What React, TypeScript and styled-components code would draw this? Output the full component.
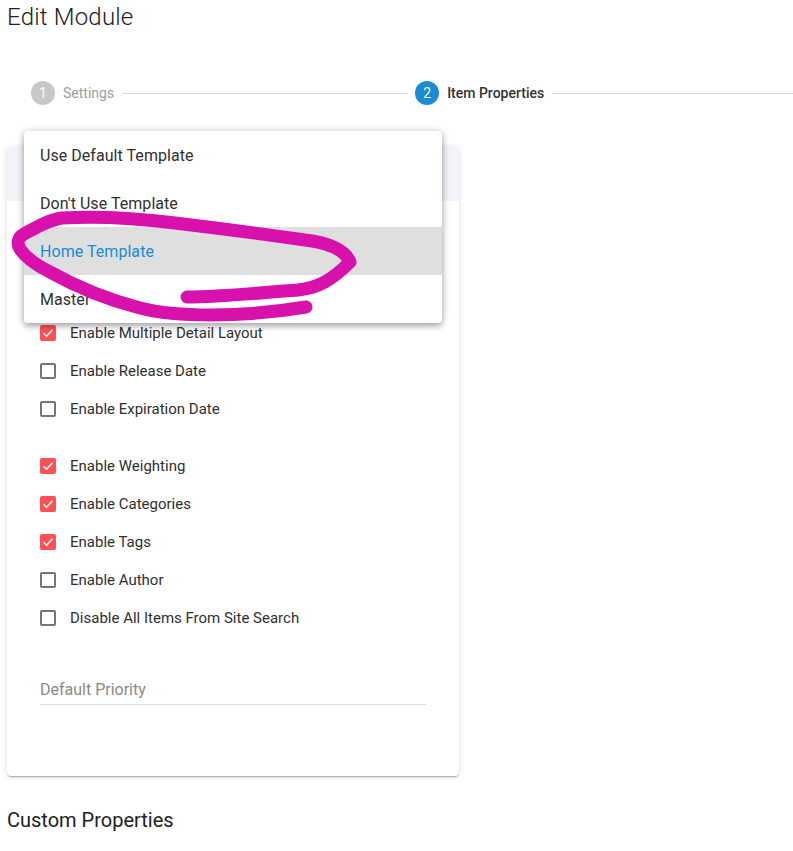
import React, { FC } from 'react'
import styled, { createGlobalStyle } from 'styled-components'

const GlobalStyle = createGlobalStyle`
  html, body {
    margin: 0;
    padding: 0;
    background: #fff;
    overflow: hidden;
  }
  body {
    font-family: Roboto, "Liberation Sans", sans-serif;
    color: #212121;
  }
`

const Page = styled.div`
  position: relative;
  width: 793px;
  height: 851px;
  overflow: hidden;
  padding-top: 1px;
  box-sizing: border-box;
`

const Title = styled.h1`
  margin: 0 0 0 7px;
  height: 32px;
  font-size: 24px;
  line-height: 32px;
  font-weight: 300;
  letter-spacing: 0.2px;
  color: #212121;
`

const Stepper = styled.div`
  display: flex;
  align-items: center;
  margin-top: 48px;
  padding-left: 31px;
  height: 24px;
`

const StepCircle = styled.span<{ $active?: boolean }>`
  flex: none;
  width: 24px;
  height: 24px;
  border-radius: 50%;
  display: flex;
  align-items: center;
  justify-content: center;
  font-size: 14px;
  color: #fff;
  background: ${p => (p.$active ? '#1a8bd4' : '#c8c8c8')};
`

const StepLabel = styled.span<{ $active?: boolean }>`
  flex: none;
  margin-left: 8px;
  font-size: 14px;
  font-weight: ${p => (p.$active ? 500 : 400)};
  color: ${p => (p.$active ? '#333' : '#9e9e9e')};
`

const StepLine = styled.span<{ $width: number }>`
  flex: none;
  width: ${p => p.$width}px;
  height: 1px;
  margin: 0 8px;
  background: #dcdcdc;
`

const Card = styled.section`
  position: relative;
  box-sizing: border-box;
  width: 452px;
  height: 628px;
  margin: 43px 0 0 7px;
  border-radius: 4px;
  background: #fff;
  box-shadow: 0 2px 2px -1px rgba(0, 0, 0, 0.35), 0 0 6px rgba(0, 0, 0, 0.12);
`

const CardBand = styled.div`
  height: 53px;
  border-radius: 4px 4px 0 0;
  background: #f3f4f9;
`

const CardBody = styled.div`
  padding: 122px 33px 0;
`

const OptionGroup = styled.div`
  display: flex;
  flex-direction: column;
  gap: 18px;
  margin-bottom: 37px;
`

const OptionRow = styled.label`
  display: flex;
  align-items: center;
  height: 20px;
  font-size: 15px;
  color: #303030;
`

const Box = styled.span<{ $checked?: boolean }>`
  flex: none;
  box-sizing: border-box;
  display: flex;
  align-items: center;
  justify-content: center;
  width: 16px;
  height: 16px;
  margin-right: 14px;
  border-radius: 2px;
  border: ${p => (p.$checked ? 'none' : '2px solid #757575')};
  background: ${p => (p.$checked ? '#fc5255' : 'transparent')};
`

const PriorityField = styled.div`
  margin-top: 50px;
  width: 386px;
  height: 27px;
  box-sizing: border-box;
  border-bottom: 1px solid #dcdcdc;
  font-size: 16px;
  line-height: 24px;
  color: #8a8a8a;
`

const SectionTitle = styled.h2`
  margin: 32px 0 0 7px;
  font-size: 20px;
  line-height: 24px;
  font-weight: 400;
  color: #212121;
`

const Menu = styled.ul`
  position: absolute;
  left: 24px;
  top: 131px;
  width: 418px;
  margin: 0;
  padding: 0;
  list-style: none;
  background: #fff;
  border-radius: 4px;
  box-shadow: 0 3px 6px rgba(0, 0, 0, 0.3), 0 0 10px rgba(0, 0, 0, 0.14);
`

const MenuItem = styled.li<{ $selected?: boolean }>`
  box-sizing: border-box;
  height: 48px;
  padding: 1px 0 0 16px;
  font-size: 16px;
  line-height: 48px;
  letter-spacing: 0.05px;
  color: ${p => (p.$selected ? '#1a8bd4' : '#303030')};
  background: ${p => (p.$selected ? '#dfdfdf' : 'transparent')};
`

const Scribble = styled.svg`
  position: absolute;
  left: 0;
  top: 0;
  pointer-events: none;
`

const CheckMark: FC = () => (
  <svg width='12' height='12' viewBox='0 0 12 12' fill='none'>
    <path d='M1.5 6.2 L4.6 9.2 L10.5 2.8' stroke='#fff' strokeWidth='1.5' />
  </svg>
)

interface OptionProps {
  label: string
  checked?: boolean
}

const Option: FC<OptionProps> = ({ label, checked }) => (
  <OptionRow>
    <Box $checked={checked}>{checked && <CheckMark />}</Box>
    {label}
  </OptionRow>
)

const App: FC = () => {
  return (
    <Page>
      <GlobalStyle />
      <Title>Edit Module</Title>
      <Stepper>
        <StepCircle>1</StepCircle>
        <StepLabel>Settings</StepLabel>
        <StepLine $width={285} />
        <StepCircle $active>2</StepCircle>
        <StepLabel $active>Item Properties</StepLabel>
        <StepLine $width={241} />
      </Stepper>
      <Card>
        <CardBand />
        <CardBody>
          <OptionGroup>
            <Option label='Enable Multiple Detail Layout' checked />
            <Option label='Enable Release Date' />
            <Option label='Enable Expiration Date' />
          </OptionGroup>
          <OptionGroup>
            <Option label='Enable Weighting' checked />
            <Option label='Enable Categories' checked />
            <Option label='Enable Tags' checked />
            <Option label='Enable Author' />
            <Option label='Disable All Items From Site Search' />
          </OptionGroup>
          <PriorityField>Default Priority</PriorityField>
        </CardBody>
      </Card>
      <SectionTitle>Custom Properties</SectionTitle>
      <Menu>
        <MenuItem>Use Default Template</MenuItem>
        <MenuItem>Don't Use Template</MenuItem>
        <MenuItem $selected>Home Template</MenuItem>
        <MenuItem>Master</MenuItem>
      </Menu>
      <Scribble width='793' height='851' viewBox='0 0 793 851' fill='none'>
        <path
          d='M187 297 C225 297 265 292 298 290 C318 288 332 280 350 262 C345 250 330 243 305 240 C270 235 225 229 175 223 C135 218 95 216 62 218 C48 220 35 228 24 234 C17 238 17 244 20 249 C26 258 36 265 50 272 C75 286 105 299 140 308 C175 317 240 318 306 307'
          stroke='#d911ac'
          strokeWidth='13'
          strokeLinecap='round'
          strokeLinejoin='round'
        />
      </Scribble>
    </Page>
  )
}

export default App
